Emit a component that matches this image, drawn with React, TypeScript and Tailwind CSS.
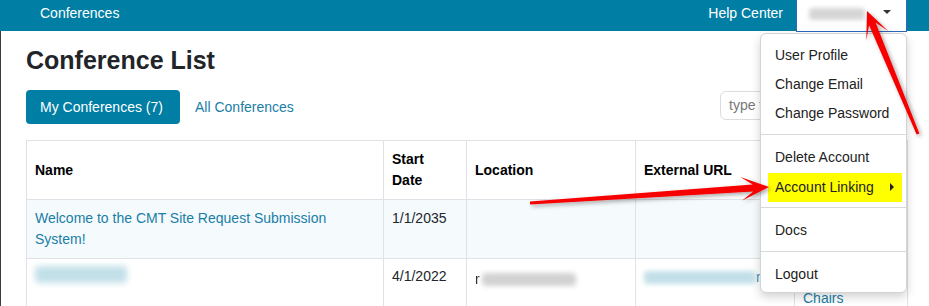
import React from "react";

type Pt = [number, number];

function arrowPoints(
  tail: Pt,
  tip: Pt,
  join: number,
  barb: number,
  hw: number,
  w0: number,
  w1: number
): string {
  const [tx, ty] = tail;
  const [hx, hy] = tip;
  const dx = hx - tx;
  const dy = hy - ty;
  const L = Math.hypot(dx, dy);
  const ux = dx / L;
  const uy = dy / L;
  const nx = -uy;
  const ny = ux;
  const jx = hx - ux * join;
  const jy = hy - uy * join;
  const bx = hx - ux * barb;
  const by = hy - uy * barb;
  const pts: Pt[] = [
    [tx + (nx * w0) / 2, ty + (ny * w0) / 2],
    [jx + (nx * w1) / 2, jy + (ny * w1) / 2],
    [bx + nx * hw, by + ny * hw],
    [hx, hy],
    [bx - nx * hw, by - ny * hw],
    [jx - (nx * w1) / 2, jy - (ny * w1) / 2],
    [tx - (nx * w0) / 2, ty - (ny * w0) / 2],
  ];
  return pts.map((p) => `${p[0].toFixed(1)},${p[1].toFixed(1)}`).join(" ");
}

function Arrows() {
  return (
    <svg
      className="absolute left-0 top-0 pointer-events-none z-30"
      width={929}
      height={306}
      viewBox="0 0 929 306"
    >
      <defs>
        <filter id="sh" x="-20%" y="-20%" width="140%" height="140%">
          <feDropShadow dx="2" dy="2" stdDeviation="2" floodColor="#000" floodOpacity="0.35" />
        </filter>
      </defs>
      <polygon
        points={arrowPoints([918, 134], [867, 11], 14, 27, 12, 3, 7)}
        fill="#f70000"
        filter="url(#sh)"
      />
      <polygon
        points={arrowPoints([530, 203], [769, 187], 16, 28, 12, 3, 7)}
        fill="#f70000"
        filter="url(#sh)"
      />
    </svg>
  );
}

function Menu() {
  const Item = ({ label, hl }: { label: string; hl?: boolean }) => (
    <div className="h-[29px] flex items-center">
      {hl ? (
        <div className="ml-[7px] mr-[4px] mt-[3px] h-[29px] flex-1 bg-[#ffff00] flex items-center pl-[7px] pr-[8px]">
          <span>{label}</span>
          <span className="ml-auto w-0 h-0 border-y-[4px] border-y-transparent border-l-[4px] border-l-[#222]" />
        </div>
      ) : (
        <span className="pl-[14px]">{label}</span>
      )}
    </div>
  );
  const Div = () => <div className="my-[7px] h-px bg-[#d9d9d9]" />;
  return (
    <div className="absolute left-[760px] top-[33px] w-[147px] h-[260px] z-20 bg-white border border-[#d4d4d4] rounded-[6px] shadow-[0_4px_10px_rgba(0,0,0,0.18)] py-[6px] text-[14px] text-[#222] leading-[20px]">
      <Item label="User Profile" />
      <Item label="Change Email" />
      <Item label="Change Password" />
      <Div />
      <Item label="Delete Account" />
      <Item label="Account Linking" hl />
      <Div />
      <Item label="Docs" />
      <Div />
      <Item label="Logout" />
    </div>
  );
}

export default function App() {
  const link = "text-[#1a7ea6]";
  const th = "border border-[#dfe3e8] px-[8px] py-[8px] align-middle text-left font-bold text-black";
  const td = "border border-[#dfe3e8] px-[8px] py-[8px] align-top";
  return (
    <div
      className="relative w-[929px] h-[306px] overflow-hidden bg-white text-[14px] leading-[21px] text-[#212529]"
      style={{ fontFamily: '"Liberation Sans", Arial, sans-serif' }}
    >
      {/* top bar */}
      <div className="h-[31px] bg-[#007ea4] flex items-start text-white">
        <span className="pl-[40px] pt-[3px] leading-[20px]">Conferences</span>
        <span className="ml-auto pt-[3px] leading-[20px] mr-[13px]">Help Center</span>
        <div className="relative z-10 h-[32px] w-[111px] bg-white border-x border-b border-[#2c68bd] flex items-start">
          <div className="mt-[8px] ml-[12px] h-[12px] w-[56px] bg-[#d6d6d6] blur-[2px] rounded-sm" />
          <span className="ml-auto mr-[15px] mt-[10px] w-0 h-0 border-x-[4px] border-x-transparent border-t-[4px] border-t-[#333]" />
        </div>
        <div className="w-[22px]" />
      </div>

      {/* main */}
      <div className="border-l border-[#3d3d3d] h-[275px] pl-[25px] pr-[22px] pt-[15px]">
        <h1 className="text-[25px] leading-[29px] font-bold text-[#212529]">Conference List</h1>

        <div className="mt-[15px] flex items-start">
          <div className="h-[34px] w-[154px] rounded-[4px] bg-[#007ea4] text-white pl-[14px] flex items-center">
            My Conferences (7)
          </div>
          <div className={`h-[34px] px-[15px] flex items-center ${link}`}>All Conferences</div>
          <div className="ml-auto mt-[1px] w-[187px] h-[29px] rounded-[6px] border border-[#dcdcdc] flex items-center pl-[8px] text-[#777]">
            type t
          </div>
        </div>

        <table className="mt-[16px] w-[881px] border-collapse table-fixed">
          <colgroup>
            <col className="w-[357px]" />
            <col className="w-[83px]" />
            <col className="w-[169px]" />
            <col className="w-[159px]" />
            <col className="w-[113px]" />
          </colgroup>
          <thead>
            <tr className="h-[58px]">
              <th className={th}>Name</th>
              <th className={th}>
                Start
                <br />
                Date
              </th>
              <th className={th}>Location</th>
              <th className={th}>External URL</th>
              <th className={th}></th>
            </tr>
          </thead>
          <tbody>
            <tr className="bg-[#f5fafd] h-[58px]">
              <td className={`${td} ${link}`}>Welcome to the CMT Site Request Submission System!</td>
              <td className={td}>1/1/2035</td>
              <td className={td}></td>
              <td className={td}></td>
              <td className={td}></td>
            </tr>
            <tr>
              <td className={td}>
                <div className="mt-[-1px] h-[17px] w-[92px] bg-[#c2e0e9] blur-[3px] rounded" />
              </td>
              <td className={`${td} pt-[7px]`}>4/1/2022</td>
              <td className={td}>
                <div className="flex items-center mt-[2px]">
                  <span className="text-[#333] blur-[0.6px]">r</span>
                  <div className="ml-[2px] h-[13px] w-[94px] bg-[#d2d2d2] blur-[2.5px] rounded" />
                </div>
              </td>
              <td className={td}>
                <div className="flex items-center">
                  <div className="h-[13px] w-[112px] bg-[#c2dfe8] blur-[2.5px] rounded" />
                  <span className={link}>n</span>
                </div>
              </td>
              <td className={`${td} ${link}`}>
                <div className="h-[21px]" />
                <div>Chairs</div>
              </td>
            </tr>
          </tbody>
        </table>
      </div>

      <Menu />
      <Arrows />
    </div>
  );
}
